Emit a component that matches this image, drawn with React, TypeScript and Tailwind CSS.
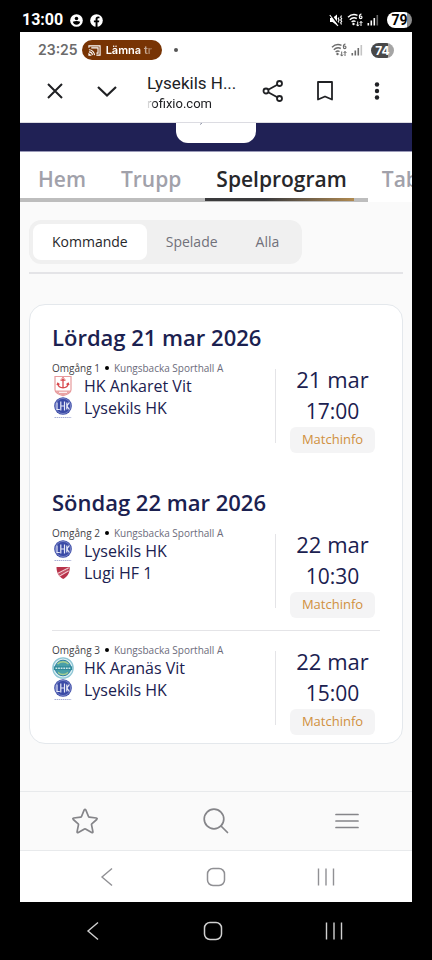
import { ReactNode, useState } from "react";

interface Team {
  name: string;
  logo: ReactNode;
}

interface Match {
  round: number;
  arena: string;
  home: Team;
  away: Team;
  date: string;
  time: string;
}

interface MatchDay {
  title: string;
  matches: Match[];
}

const AnkaretLogo = () => (
  <svg className="w-[22px] h-[22px] shrink-0" viewBox="0 0 22 22" fill="none">
    <path
      d="M3 1.500h16v13.200c0 3.600-4 4.800-8 6-4-1.200-8-2.400-8-6z"
      fill="#fff"
      stroke="#e79a9c"
      strokeWidth="1.200"
    />
    <path d="M3.500 15.500h15c-.6 2.500-4 3.800-7.500 4.800-3.500-1-6.900-2.300-7.500-4.800z" fill="#e9a3a4" />
    <path
      d="M11 4v8.500M8.500 5.200h5M5.800 8.500c.4 3 2.400 4.300 5.200 4.300s4.800-1.300 5.200-4.300M5 10l.8-1.800L7.500 9.500M17 10l-.8-1.800-1.700 1.300"
      stroke="#d8484c"
      strokeWidth="1.300"
    />
    <circle cx="11" cy="3.500" r="1" stroke="#d8484c" strokeWidth=".8" />
    <path d="M7 17.300h8" stroke="#fff" strokeWidth="1" />
  </svg>
);

const LysekilLogo = () => (
  <svg className="w-[22px] h-[22px] shrink-0" viewBox="0 0 22 22" fill="none">
    <circle cx="11" cy="9" r="8.800" fill="#3a4aa6" />
    <circle cx="11" cy="9" r="7.600" stroke="#8f9ad3" strokeWidth=".7" />
    <path
      d="M5 5.500v7h2.800M8.800 4.500v9M12.500 4.500v9M8.800 9h3.700M14.800 5.500v7M17.300 5.500 15 9l2.300 3.500"
      stroke="#e6e9f8"
      strokeWidth="1.200"
    />
    <path d="M2.500 20.500h17" stroke="#a9b0d6" strokeWidth="1.200" strokeDasharray="1.500 .6" />
  </svg>
);

const LugiLogo = () => (
  <svg className="w-[22px] h-[22px] shrink-0" viewBox="0 0 22 22" fill="none">
    <path d="M4.500 5h13.200c.2 5.500-1.700 9.300-6.500 12-4.700-2.700-6.700-6.500-6.700-12z" fill="#b8324a" />
    <path d="M5.500 11.500 16.800 5.800M7.200 14.200l9.500-5.500" stroke="#f1c9d0" strokeWidth="1.200" />
    <path d="M6.500 12.700l10-5.400" stroke="#d77a89" strokeWidth="1" strokeDasharray="1.500 .8" />
  </svg>
);

const AranasLogo = () => (
  <svg className="w-[22px] h-[22px] shrink-0" viewBox="0 0 22 22" fill="none">
    <circle cx="11" cy="11" r="10.200" fill="#d9eef2" stroke="#8cc5d4" strokeWidth="1.200" />
    <circle cx="11" cy="11" r="7.800" fill="#4a9fa8" stroke="#2f7fa6" strokeWidth="1" />
    <path d="M5.500 7c3-3 8-3 11 0M6 15.500c3 2.500 7 2.500 10 0" stroke="#a8cf8f" strokeWidth="1.500" />
    <path d="M1.800 9.300h18.400v3.800H1.800z" fill="#2f8a9a" />
    <path d="M3.500 11.200h15" stroke="#cbe7ea" strokeWidth="1.600" strokeDasharray="1.800 .8" />
  </svg>
);

const lysekil: Team = { name: "Lysekils HK", logo: <LysekilLogo /> };

const matchDays: MatchDay[] = [
  {
    title: "Lördag 21 mar 2026",
    matches: [
      {
        round: 1,
        arena: "Kungsbacka Sporthall A",
        home: { name: "HK Ankaret Vit", logo: <AnkaretLogo /> },
        away: lysekil,
        date: "21 mar",
        time: "17:00",
      },
    ],
  },
  {
    title: "Söndag 22 mar 2026",
    matches: [
      {
        round: 2,
        arena: "Kungsbacka Sporthall A",
        home: lysekil,
        away: { name: "Lugi HF 1", logo: <LugiLogo /> },
        date: "22 mar",
        time: "10:30",
      },
      {
        round: 3,
        arena: "Kungsbacka Sporthall A",
        home: { name: "HK Aranäs Vit", logo: <AranasLogo /> },
        away: lysekil,
        date: "22 mar",
        time: "15:00",
      },
    ],
  },
];

const tabs = ["Hem", "Trupp", "Spelprogram", "Tab"];
const filters = ["Kommande", "Spelade", "Alla"];

const WifiIcon = () => (
  <svg className="w-4 h-4" viewBox="0 0 16 16" fill="none" stroke="currentColor">
    <path d="M1 5.200C3.700 2.600 7.500 2 10.500 3.300M2.800 7.700c2-1.900 4.800-2.300 7-1.200M4.600 10c1.200-1 2.700-1.200 4-.5" strokeWidth="1.400" />
    <circle cx="6.500" cy="12" r="1.200" fill="currentColor" stroke="none" />
    <path d="M14.500 2c-1.500.2-2.200 1.200-2.200 2.800" strokeWidth="1.100" />
    <circle cx="13.700" cy="5.300" r="1.300" strokeWidth="1.100" />
    <path d="M10.700 9.500v4.500M9.300 12.500l1.400 1.600 1.400-1.600M14 14V9.500M12.700 11 14 9.400l1.400 1.600" strokeWidth="1" />
  </svg>
);

const SignalIcon = () => (
  <svg className="w-3 h-3" viewBox="0 0 12 12" fill="currentColor">
    <path d="M.5 9h1.600v2.500H.5zM3.500 6.500h1.600v5H3.500zM6.500 4h1.600v7.500H6.500z" />
    <path d="M9.500 1h1.600v10.500H9.500z" opacity=".4" />
  </svg>
);

const PhoneButtons = () => (
  <>
    <button aria-label="Tillbaka">
      <svg className="w-5 h-5" viewBox="0 0 20 20" fill="none" stroke="currentColor" strokeWidth="1.400">
        <path d="M16 1.500 6 10l10 8.500" />
      </svg>
    </button>
    <button aria-label="Startskärm">
      <svg className="w-5 h-5" viewBox="0 0 20 20" fill="none" stroke="currentColor" strokeWidth="1.500">
        <rect x="1.500" y="1.500" width="17" height="17" rx="5.500" />
      </svg>
    </button>
    <button aria-label="Senaste appar">
      <svg className="w-5 h-5" viewBox="0 0 20 20" fill="none" stroke="currentColor" strokeWidth="1.400">
        <path d="M2.500 1.500v17M10 1.500v17M17.500 1.500v17" />
      </svg>
    </button>
  </>
);

function PhoneStatusBar() {
  return (
    <div className="h-8 pt-2 pl-[22px] pr-5 flex items-center justify-between text-white">
      <div className="flex items-center gap-[7px]">
        <span className="font-[Roboto,sans-serif] font-bold text-base">13:00</span>
        <svg className="w-[13px] h-[13px]" viewBox="0 0 14 14">
          <circle cx="7" cy="7" r="6.800" fill="currentColor" />
          <circle cx="7" cy="4.800" r="1.900" fill="#000" />
          <path d="M3 8.300c2.500-1 5.500-1 8 0-.5 2-2 3.200-4 3.200s-3.500-1.200-4-3.200z" fill="#000" />
        </svg>
        <svg className="w-[13px] h-[13px]" viewBox="0 0 14 14">
          <circle cx="7" cy="7" r="6.800" fill="currentColor" />
          <path d="M6 14V9H4.200V7H6V5.600C6 3.700 7 2.800 8.700 2.800l1.500.1v1.800h-1c-.9 0-1.100.4-1.100 1.100V7H10l-.3 2H8.100v5z" fill="#000" />
        </svg>
      </div>
      <div className="flex items-center gap-1">
        <svg className="w-[14px] h-[14px]" viewBox="0 0 14 14" fill="none" stroke="currentColor">
          <path d="M1 5h2.500L8 1.500v11L3.500 9H1z" fill="currentColor" stroke="none" />
          <path d="M1.500 1.500 10 12.500" stroke="#000" strokeWidth="2" />
          <path d="M.8 2 9 13M10 4.500l-.8 1.300 1 1.200-1 1.200.8 1.300M12.500 2.500l-.8 1.800 1 1.400-1 1.300 1 1.300-1 1.400.8 1.800" strokeWidth="1.100" />
        </svg>
        <WifiIcon />
        <SignalIcon />
        <span className="ml-1 w-[25px] h-4 rounded-full bg-linear-to-r from-white from-80% to-[#8c8c8c] to-80% text-black font-[Roboto,sans-serif] font-bold text-sm leading-4 text-center">
          79
        </span>
      </div>
    </div>
  );
}

function SharedStatusBar() {
  return (
    <div className="h-9 px-[18px] flex items-center justify-between font-[Inter,sans-serif] text-[#6b6b6b]">
      <div className="flex items-center">
        <span className="text-sm font-semibold">23:25</span>
        <div className="ml-1 h-5 w-20 rounded-full bg-[#783404] text-white flex items-center gap-[5px] pl-[6px] overflow-hidden">
          <svg className="w-[13px] h-[13px] shrink-0" viewBox="0 0 14 14" fill="none" stroke="currentColor" strokeWidth="1.200">
            <path d="M1 4V2h12v10H9M1 6.200A6 6 0 0 1 7 12M1 8.500A3.700 3.700 0 0 1 4.700 12M1 10.700 2.500 12H1zM3.500 4.200h7.300v5.600H9" />
          </svg>
          <span className="text-[11px] font-semibold whitespace-nowrap [mask-image:linear-gradient(to_right,#000_32px,transparent_50px)]">
            Lämna tr
          </span>
        </div>
        <span className="ml-3 w-1 h-1 rounded-full bg-[#555]" />
      </div>
      <div className="flex items-center gap-1">
        <WifiIcon />
        <SignalIcon />
        <span className="w-[23px] h-[15px] ml-1 rounded-full bg-linear-to-r from-[#484848] from-75% to-[#a5a5a5] to-75% text-white font-bold text-xs leading-[15px] text-center">
          74
        </span>
      </div>
    </div>
  );
}

function BrowserBar() {
  return (
    <div className="h-[55px] pl-6 pr-[23px] pb-2 flex items-center border-b border-[#dcdce2] font-[Roboto,sans-serif] text-[#202124]">
      <button aria-label="Stäng">
        <svg className="w-6 h-6 -ml-px" viewBox="0 0 24 24" fill="none" stroke="currentColor" strokeWidth="2">
          <path d="m5 5 14 14M19 5 5 19" />
        </svg>
      </button>
      <button aria-label="Minimera" className="ml-7">
        <svg className="w-6 h-6" viewBox="0 0 24 24" fill="none" stroke="currentColor" strokeWidth="2.200">
          <path d="m3 8 9 8.500L21 8" />
        </svg>
      </button>
      <div className="ml-7 pt-1 grow whitespace-nowrap">
        <div className="text-[17px] leading-[22px]">Lysekils H...</div>
        <div className="text-[13px] leading-5 [mask-image:linear-gradient(to_right,transparent,#000_8px)]">
          rofixio.com
        </div>
      </div>
      <div className="flex items-center gap-7">
        <button aria-label="Dela">
          <svg className="w-6 h-6" viewBox="0 0 24 24" fill="none" stroke="currentColor" strokeWidth="1.800">
            <circle cx="5" cy="12" r="2.500" />
            <circle cx="18.500" cy="4.500" r="2.500" />
            <circle cx="18.500" cy="19.500" r="2.500" />
            <path d="m7.200 10.800 9.100-5.100M7.200 13.200l9.100 5.100" />
          </svg>
        </button>
        <button aria-label="Bokmärk">
          <svg className="w-6 h-6" viewBox="0 0 24 24" fill="none" stroke="currentColor" strokeWidth="1.800" strokeLinejoin="round">
            <path d="M5 3h14v17.500l-7-3-7 3z" />
          </svg>
        </button>
        <button aria-label="Mer">
          <svg className="w-6 h-6" viewBox="0 0 24 24" fill="currentColor">
            <circle cx="12" cy="5.500" r="2.200" />
            <circle cx="12" cy="12" r="2.200" />
            <circle cx="12" cy="18.500" r="2.200" />
          </svg>
        </button>
      </div>
    </div>
  );
}

function MatchRow({ match }: { match: Match }) {
  return (
    <li className="flex py-3 border-b border-[#e4e4e7] last:border-b-0 last:pb-2">
      <div className="grow">
        <p className="text-[10px] leading-[14px] text-[#6b6b7b] flex items-center gap-[5px] whitespace-nowrap">
          <span className="text-[#3f3f46]">Omgång {match.round}</span>
          <span className="w-1 h-1 rounded-full bg-black" />
          <span>{match.arena}</span>
        </p>
        {[match.home, match.away].map(({ name, logo }) => (
          <div key={name} className="flex items-center gap-[10px] h-[22px] text-base">
            {logo}
            {name}
          </div>
        ))}
      </div>
      <div className="mt-2 mb-[10px] border-l border-[#e4e4e7]" />
      <div className="w-[104px] pl-[9px] flex flex-col items-center">
        <span className="text-[22px] leading-9 font-medium">{match.date}</span>
        <span className="text-[21px] leading-7">{match.time}</span>
        <button className="mt-0.5 h-[26px] px-3 rounded-md bg-[#f4f4f5] text-[13px] font-medium text-[#d09040]">
          Matchinfo
        </button>
      </div>
    </li>
  );
}

export default function App() {
  const [activeTab, setActiveTab] = useState("Spelprogram");
  const [filter, setFilter] = useState("Kommande");

  return (
    <div className="min-h-screen bg-black flex flex-col">
      <PhoneStatusBar />
      <div className="mx-5 grow bg-[#fafafa] flex flex-col overflow-hidden">
        <div className="bg-white">
          <SharedStatusBar />
          <BrowserBar />
        </div>
        <header className="h-[29px] bg-[#202155] border-b border-[#9a9ab8] flex justify-center items-start">
          <div className="w-20 h-5 bg-white rounded-b-xl">
            <svg className="w-10 h-1 ml-1" viewBox="0 0 40 4" stroke="#8d92a5" fill="none">
              <path d="m22 0-2 1.500" />
            </svg>
          </div>
        </header>

        <div className="font-['Open_Sans',sans-serif]">
          <nav className="bg-white overflow-hidden">
            <div className="h-[46px] pt-2 pl-[9px] flex items-center gap-[17px]">
              {tabs.map((tab) => (
                <button
                  key={tab}
                  onClick={() => setActiveTab(tab)}
                  className={
                    "px-[9px] text-[21px] leading-8 font-semibold " +
                    (tab === activeTab ? "text-[#27272a]" : "text-[#a1a1aa]")
                  }
                >
                  {tab}
                </button>
              ))}
            </div>
            <div className="w-[348px] max-w-full h-1 bg-[#bdbdbd]">
              <div className="ml-[185px] w-[149px] h-[3px] bg-linear-to-r from-[#3a3a3c] from-40% to-[#b08a50]" />
            </div>
          </nav>

          <main className="px-[9px] pt-[18px] pb-[47px]">
            <div className="inline-flex h-11 p-1 rounded-xl bg-[#f0f0f0] text-sm">
              {filters.map((name) => (
                <button
                  key={name}
                  onClick={() => setFilter(name)}
                  className={
                    "px-[19px] rounded-lg font-medium " +
                    (name === filter ? "bg-white text-[#27272a]" : "text-[#71717a]")
                  }
                >
                  {name}
                </button>
              ))}
            </div>
            <hr className="mt-2 border-t-2 border-[#e4e4e7]" />

            <section className="mt-[30px] px-[22px] pt-5 rounded-2xl border border-[#e4e8ec] bg-white text-[#1b2150]">
              {matchDays.map((day) => (
                <div key={day.title} className="mb-[29px] last:mb-0">
                  <h2 className="text-[22px] leading-6 font-semibold">{day.title}</h2>
                  <ul>
                    {day.matches.map((match) => (
                      <MatchRow key={match.round} match={match} />
                    ))}
                  </ul>
                </div>
              ))}
            </section>
          </main>
        </div>

        <div className="mt-auto h-[60px] grid grid-cols-3 border-y border-[#e8eaec] text-[#858589]">
          <button aria-label="Favoriter" className="flex items-center justify-center">
            <svg className="w-7 h-7" viewBox="0 0 28 28" fill="none" stroke="currentColor" strokeWidth="1.700" strokeLinejoin="round">
              <path d="M13.200 2.900q.8-1.200 1.600 0l2.800 6.800q.2.500.7.500l7 .8q1.500.3.400 1.500l-4.900 4.300q-.4.400-.3.900l1.400 7q.1 1.500-1.200.9l-6.200-3.700q-.5-.3-1 0l-6.200 3.700q-1.300.6-1.200-.9l1.400-7q.1-.5-.3-.9l-4.900-4.300q-1.100-1.200.4-1.500l7-.8q.5 0 .7-.5z" />
            </svg>
          </button>
          <button aria-label="Sök" className="flex items-center justify-center">
            <svg className="w-7 h-7" viewBox="0 0 28 28" fill="none" stroke="currentColor" strokeWidth="1.700" strokeLinecap="round">
              <circle cx="12" cy="12" r="9.800" />
              <path d="m19 19 6.500 6.500" />
            </svg>
          </button>
          <button aria-label="Meny" className="flex items-center justify-center">
            <svg className="w-7 h-7" viewBox="0 0 28 28" fill="none" stroke="currentColor" strokeWidth="1.700" strokeLinecap="round">
              <path d="M3 7.500h22M3 14h22M3 20.500h22" />
            </svg>
          </button>
        </div>
        <div className="h-[51px] px-[31px] bg-white text-[#909094] grid grid-cols-3 place-items-center">
          <PhoneButtons />
        </div>
      </div>
      <div className="h-[58px] pl-8 pr-[38px] text-[#d0d0d0] grid grid-cols-3 place-items-center">
        <PhoneButtons />
      </div>
    </div>
  );
}
